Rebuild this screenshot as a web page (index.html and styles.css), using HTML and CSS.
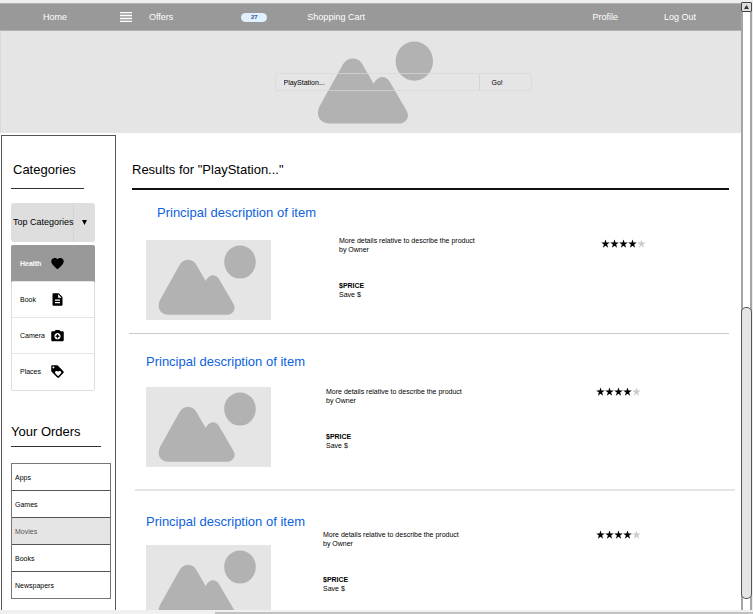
FILE: index.html
```html
<!DOCTYPE html>
<html lang="en">
<head>
<meta charset="utf-8">
<title>Search results</title>
<link rel="stylesheet" href="styles.css">
</head>
<body>
<svg class="sprite" aria-hidden="true">
  <symbol id="picture" viewBox="0 0 125 80">
    <path d="M33 26C37 18 47 17.500 51 26L59.700 41C63 34 69.500 33.500 73 39L87 63C91 69 87 74.700 81 74.700H23C14 74.700 10.500 68 14 60Z"/>
    <ellipse cx="94" cy="22" rx="15.800" ry="16.600"/>
  </symbol>
  <symbol id="star" viewBox="0 0 24 24">
    <path d="M12 17.800 19 23l-2.700-8.300L23.500 9.500h-8.700L12 1 9.200 9.500H.5l7.200 5.200L5 23z"/>
  </symbol>
</svg>
<div class="window">
  <div class="viewport">
    <div class="page">
      <nav class="topbar">
        <a class="home" href="#">Home</a>
        <button class="burger" type="button" aria-label="Menu"><svg viewBox="0 0 12 10"><path class="shade" d="M0 0h12v10H0z"/><path d="M0 0h12v1H0zM0 3h12v1H0zM0 6h12v1H0zM0 9h12v1H0z"/></svg></button>
        <a class="offers" href="#">Offers</a>
        <span class="badge">27</span>
        <a class="cart" href="#">Shopping Cart</a>
        <a class="profile" href="#">Profile</a>
        <a class="logout" href="#">Log Out</a>
      </nav>
      <header class="banner">
        <svg class="banner-art" aria-hidden="true"><use href="#picture"/></svg>
        <form class="search">
          <input type="text" value="PlayStation..." aria-label="Search">
          <button type="button">Go!</button>
        </form>
      </header>
      <div class="columns">
        <aside class="sidebar">
          <h2 class="categories-title">Categories</h2>
          <div class="picker">
            <select aria-label="Category group"><option>Top Categories</option></select>
            <svg class="caret" viewBox="0 0 5 5" aria-hidden="true"><path d="M0 0h5L2.500 5z"/></svg>
          </div>
          <ul class="categories">
            <li><a class="current" href="#">Health<svg viewBox="0 0 24 24"><path d="M12 21.350l-1.450-1.320C5.400 15.360 2 12.280 2 8.500 2 5.420 4.420 3 7.500 3c1.740 0 3.410.81 4.500 2.090C13.090 3.810 14.760 3 16.500 3 19.580 3 22 5.420 22 8.500c0 3.780-3.400 6.860-8.550 11.540L12 21.350z"/></svg></a></li>
            <li><a href="#">Book<svg viewBox="0 0 24 24"><path d="M14 2H6c-1.100 0-1.990.9-1.990 2L4 20c0 1.100.89 2 1.990 2H18c1.100 0 2-.9 2-2V8l-6-6zm2 16H8v-2h8v2zm0-4H8v-2h8v2zm-3-5V3.500L18.500 9H13z"/></svg></a></li>
            <li><a href="#">Camera<svg viewBox="0 0 24 24"><path d="M9 3L7.170 5H4c-1.100 0-2 .9-2 2v12c0 1.100.9 2 2 2h16c1.100 0 2-.9 2-2V7c0-1.100-.9-2-2-2h-3.170L15 3H9zm3 15c-2.760 0-5-2.240-5-5s2.240-5 5-5 5 2.240 5 5-2.240 5-5 5z"/><path d="M12 17l1.250-2.750L16 13l-2.750-1.250L12 9l-1.250 2.750L8 13l2.750 1.250z"/></svg></a></li>
            <li><a href="#">Places<svg viewBox="0 0 24 24"><path d="M21.410 11.580l-9-9C12.050 2.220 11.550 2 11 2H4c-1.100 0-2 .9-2 2v7c0 .55.22 1.050.59 1.420l9 9c.36.36.86.58 1.410.58.55 0 1.050-.22 1.410-.59l7-7c.37-.36.59-.86.59-1.410 0-.55-.23-1.060-.59-1.420zM5.500 7C4.670 7 4 6.330 4 5.500S4.670 4 5.500 4 7 4.670 7 5.500 6.330 7 5.500 7zm11.770 8.270L13 19.540l-4.270-4.270C8.280 14.810 8 14.190 8 13.500c0-1.380 1.120-2.500 2.500-2.500.69 0 1.320.28 1.770.74l.73.72.73-.73c.45-.46 1.080-.73 1.770-.73 1.380 0 2.500 1.120 2.500 2.500 0 .69-.28 1.320-.73 1.770z"/></svg></a></li>
          </ul>
          <h2 class="orders-title">Your Orders</h2>
          <ul class="orders">
            <li><a href="#">Apps</a></li>
            <li><a href="#">Games</a></li>
            <li><a class="current" href="#">Movies</a></li>
            <li><a href="#">Books</a></li>
            <li><a href="#">Newspapers</a></li>
          </ul>
        </aside>
        <main class="results">
          <h1>Results for "PlayStation..."</h1>
          <article class="result first">
            <div class="lead">
              <h3><a href="#">Principal description of item</a></h3>
              <svg class="thumb" aria-hidden="true"><use href="#picture"/></svg>
            </div>
            <div class="details">
              <p>More details relative to describe the product<br>by Owner</p>
              <p><strong>$PRICE</strong><br>Save $</p>
            </div>
            <div class="stars" role="img" aria-label="4 of 5 stars"><svg><use href="#star"/></svg><svg><use href="#star"/></svg><svg><use href="#star"/></svg><svg><use href="#star"/></svg><svg class="off"><use href="#star"/></svg></div>
          </article>
          <article class="result second">
            <div class="lead">
              <h3><a href="#">Principal description of item</a></h3>
              <svg class="thumb" aria-hidden="true"><use href="#picture"/></svg>
            </div>
            <div class="details">
              <p>More details relative to describe the product<br>by Owner</p>
              <p><strong>$PRICE</strong><br>Save $</p>
            </div>
            <div class="stars" role="img" aria-label="4 of 5 stars"><svg><use href="#star"/></svg><svg><use href="#star"/></svg><svg><use href="#star"/></svg><svg><use href="#star"/></svg><svg class="off"><use href="#star"/></svg></div>
          </article>
          <article class="result third">
            <div class="lead">
              <h3><a href="#">Principal description of item</a></h3>
              <svg class="thumb" aria-hidden="true"><use href="#picture"/></svg>
            </div>
            <div class="details">
              <p>More details relative to describe the product<br>by Owner</p>
              <p><strong>$PRICE</strong><br>Save $</p>
            </div>
            <div class="stars" role="img" aria-label="4 of 5 stars"><svg><use href="#star"/></svg><svg><use href="#star"/></svg><svg><use href="#star"/></svg><svg><use href="#star"/></svg><svg class="off"><use href="#star"/></svg></div>
          </article>
        </main>
      </div>
    </div>
    <div class="scrollbar">
      <button class="scroll-up" type="button" aria-label="Scroll up"><svg viewBox="0 0 5 4"><path d="M0 4h5L2.500 0z"/></svg></button>
      <div class="track"><div class="thumb-bar"></div></div>
    </div>
  </div>
  <div class="bottom-scroll"><div></div></div>
</div>
</body>
</html>
```

FILE: styles.css
```css
* {
  box-sizing: border-box;
}

body {
  margin: 0;
  background: #eee;
  color: #000;
  font: 7px/9px "Liberation Sans", Arial, sans-serif;
}

h1, h2, h3, p, ul {
  margin: 0;
  padding: 0;
  font-weight: normal;
}

h1, h2, h3 {
  font-size: 13px;
  line-height: 16px;
}

ul {
  list-style: none;
}

a {
  color: inherit;
  text-decoration: none;
}

button, input, select {
  margin: 0;
  padding: 0;
  border: 0;
  border-radius: 0;
  background: none;
  color: inherit;
  font: inherit;
}

svg {
  display: block;
}

.sprite {
  position: absolute;
  width: 0;
  height: 0;
}

/* Window frame */
.window {
  display: flex;
  flex-direction: column;
  height: 100vh;
  overflow: hidden;
}

.viewport {
  flex: 1;
  min-height: 0;
  display: grid;
  grid-template-columns: minmax(0, 1fr) 11px;
  grid-template-rows: minmax(0, 1fr);
  padding-right: 1px;
}

.page {
  display: flex;
  flex-direction: column;
  margin-top: 3px;
  overflow: hidden;
  background: #fff;
}

/* Navigation */
.topbar {
  flex: none;
  display: flex;
  align-items: center;
  height: 28px;
  padding: 0 45px 0 43px;
  border-top: 1px solid #b3b3b3;
  border-bottom: 1px solid #b3b3b3;
  background: #999;
  color: #fff;
  font-size: 9px;
  line-height: 12px;
  white-space: nowrap;
}

.burger {
  margin: 0 17px 0 53px;
}

.burger svg {
  width: 12px;
  height: 10px;
  fill: #fff;
}

.burger .shade {
  fill: #b5b5b5;
}

.badge {
  width: 26px;
  margin: 0 40px 0 68px;
  border-radius: 5px;
  background: #e1f0ff;
  color: #36518f;
  font-size: 6px;
  line-height: 9px;
  font-weight: bold;
  text-align: center;
}

.profile {
  margin: 0 46px 0 auto;
}

/* Banner */
.banner {
  flex: none;
  display: grid;
  place-items: center;
  height: 102px;
  border-left: 1px solid #d9d9d9;
  background: #e5e5e5;
}

.banner-art, .search {
  grid-area: 1 / 1;
}

.banner-art {
  width: 148px;
  height: 95px;
  margin-left: 12px;
  fill: #b2b2b2;
}

.search {
  display: grid;
  grid-template-columns: 203px 52px;
  height: 18px;
  margin-left: 64px;
  border: 1px solid rgba(217, 217, 217, 0.7);
  border-radius: 2px;
}

.search input {
  min-width: 0;
  padding-left: 8px;
  outline: 0;
}

.search button {
  padding-left: 12px;
  border-left: 1px solid #d5d5d5;
  text-align: left;
}

/* Body columns */
.columns {
  flex: 1;
  min-height: 0;
  display: grid;
  grid-template-columns: 115px minmax(0, 1fr);
  grid-template-rows: minmax(0, 1fr);
  padding-left: 1px;
}

.sidebar {
  margin-top: 2px;
  padding: 26px 4px 0 9px;
  border: 1px solid #555;
  border-bottom: 0;
}

.categories-title {
  width: 73px;
  padding: 0 0 10px 2px;
  border-bottom: 1px solid #333;
}

.picker {
  display: grid;
  grid-template-columns: 62px 22px;
  align-items: center;
  width: 84px;
  height: 39px;
  margin-top: 14px;
  border-radius: 3px;
  background: linear-gradient(#d4d4d4, #d4d4d4) 62px 0 / 1px 100% no-repeat #dedede;
}

.picker select {
  grid-area: 1 / 1 / 2 / 3;
  width: 100%;
  height: 100%;
  padding-left: 2px;
  appearance: none;
  font-size: 9px;
}

.caret {
  grid-area: 1 / 2;
  justify-self: center;
  width: 5px;
  height: 5px;
  pointer-events: none;
}

.categories {
  width: 84px;
  margin-top: 3px;
  padding-bottom: 1px;
  border: 1px solid #ddd;
  border-radius: 2px;
}

.categories li + li {
  border-top: 1px solid #e5e5e5;
}

.categories a {
  display: grid;
  grid-template-columns: 30px 15px;
  align-items: center;
  height: 35px;
  padding-left: 8px;
}

.categories .current {
  margin: -1px;
  height: 37px;
  padding-left: 9px;
  border-radius: 2px 2px 0 0;
  background: #999;
  color: #fff;
  font-weight: bold;
}

.categories svg {
  width: 15px;
  height: 15px;
  fill: #000;
}

.orders-title {
  width: 90px;
  margin-top: 33px;
  padding-bottom: 6px;
  border-bottom: 1px solid #333;
}

.orders {
  margin-top: 16px;
  border: 1px solid #777;
}

.orders li + li {
  border-top: 1px solid #555;
}

.orders a {
  display: block;
  padding: 9px 3px 8px;
}

.orders .current {
  background: #e5e5e5;
  color: #555;
}

/* Results */
.results h1 {
  margin: 0 12px 0 16px;
  padding: 29px 0 10px;
  border-bottom: 2px solid #111;
}

.result {
  display: grid;
}

.result h3 {
  color: #0d62dd;
  white-space: nowrap;
}

.first {
  grid-template-columns: 193px minmax(0, 1fr) 128px;
  margin: 0 12px 0 13px;
  padding: 15px 0 13px 17px;
  border-bottom: 1px solid #c8c8c8;
}

.first h3 {
  padding: 0 0 19px 11px;
}

.first .details {
  padding-top: 31px;
}

.first .stars {
  padding-top: 34px;
}

.second {
  grid-template-columns: 180px minmax(0, 1fr) 139px;
  margin: 0 6px 0 19px;
  padding: 20px 0 22px 11px;
  border-bottom: 2px solid #e5e5e5;
}

.second h3 {
  padding-bottom: 17px;
}

.second .details, .second .stars {
  padding-top: 33px;
}

.third {
  grid-template-columns: 177px minmax(0, 1fr) 139px;
  margin: 0 6px 0 19px;
  padding: 23px 0 22px 11px;
}

.third h3 {
  padding-bottom: 15px;
}

.third .details, .third .stars {
  padding-top: 16px;
}

.thumb {
  width: 125px;
  height: 80px;
  background: #e5e5e5;
  fill: #b2b2b2;
}

.details p + p {
  margin-top: 27px;
}

.stars {
  display: flex;
  align-items: flex-start;
}

.stars svg {
  width: 9px;
  height: 9px;
}

.stars .off {
  fill: #ccc;
}

/* Scrollbars */
.scrollbar {
  display: flex;
  flex-direction: column;
  margin-top: 2px;
}

.scroll-up {
  display: grid;
  place-items: center;
  height: 10px;
  border: 1px solid #444;
  border-radius: 1px;
  background: #ddd;
}

.scroll-up svg {
  width: 5px;
  height: 4px;
  fill: #333;
}

.track {
  flex: 1;
  display: grid;
  grid-template-rows: 295fr 292fr 11fr;
  border: solid #a5a5a5;
  border-width: 0 2px;
  background: #fff;
}

.thumb-bar {
  grid-row: 2;
  margin: 0 -2px;
  border: 1px solid #555;
  border-radius: 5px;
  background: #e5e5e5;
}

.bottom-scroll {
  flex: none;
  height: 4px;
  padding: 2px 0 0 215px;
  background: #f0f0f0;
}

.bottom-scroll div {
  height: 2px;
  background: #c1c1c1;
}
```
